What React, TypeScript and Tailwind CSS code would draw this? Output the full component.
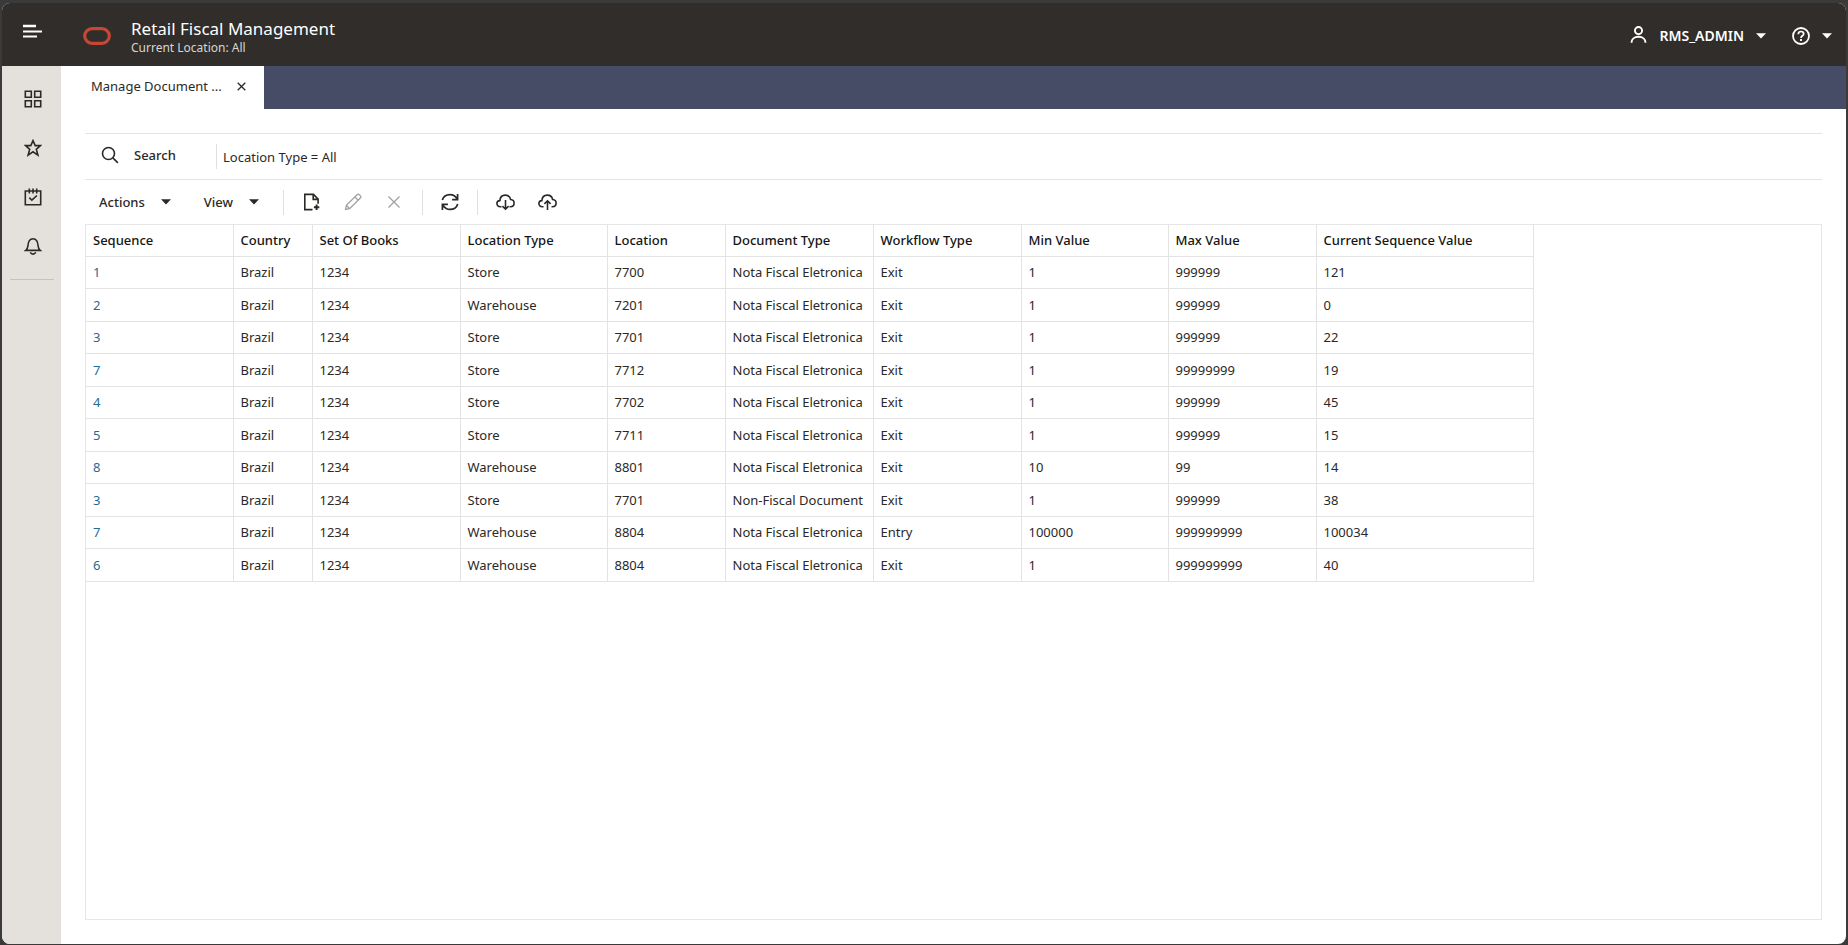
import type { ReactNode } from "react";

type IconProps = { children: ReactNode; className?: string; box?: string };

function Icon({ children, className = "size-[18px]", box = "0 0 18 18" }: IconProps) {
  return (
    <svg
      viewBox={box}
      className={`shrink-0 ${className}`}
      fill="none"
      stroke="currentColor"
      strokeWidth="1.600"
      aria-hidden="true"
    >
      {children}
    </svg>
  );
}

function Caret() {
  return (
    <svg viewBox="0 0 10 6" className="h-[6px] w-[10px] shrink-0" fill="currentColor" aria-hidden="true">
      <path d="M0 .3h10L5 5.6z" />
    </svg>
  );
}

const navItems: { label: string; icon: ReactNode }[] = [
  {
    label: "Dashboard",
    icon: (
      <Icon>
        <path d="M1.3 1.3h6v6h-6zM10.7 1.3h6v6h-6zM1.3 10.7h6v6h-6zM10.7 10.7h6v6h-6z" />
      </Icon>
    ),
  },
  {
    label: "Favorites",
    icon: (
      <Icon>
        <path d="M9 1.6l2.2 5h5.3l-4.2 3.7 1.6 5.8L9 12.8l-4.9 3.3 1.6-5.8L1.5 6.6h5.3z" />
      </Icon>
    ),
  },
  {
    label: "Tasks",
    icon: (
      <Icon>
        <path d="M1.3 3h15.4v13.7H1.3zM5.3.5v5M9 .5v5M12.7.5v5M5.3 9.6l2.6 2.6 5-4.7" />
      </Icon>
    ),
  },
  {
    label: "Notifications",
    icon: (
      <Icon>
        <path d="M1.8 13.4h14.4c-1.6-1.2-1.9-2.6-2.1-4.6C13.8 4.5 12.6 1.7 9 1.7S4.2 4.5 3.9 8.8c-.2 2-.5 3.4-2.1 4.6z" />
        <path d="M6.3 15.3c.5 1.200 1.400 1.800 2.700 1.800s2.200-.6 2.700-1.800" />
      </Icon>
    ),
  },
];

const columns = [
  { label: "Sequence", width: "w-[147px]" },
  { label: "Country", width: "w-[79px]" },
  { label: "Set Of Books", width: "w-[148px]" },
  { label: "Location Type", width: "w-[147px]" },
  { label: "Location", width: "w-[118px]" },
  { label: "Document Type", width: "w-[148px]" },
  { label: "Workflow Type", width: "w-[148px]" },
  { label: "Min Value", width: "w-[147px]" },
  { label: "Max Value", width: "w-[148px]" },
  { label: "Current Sequence Value", width: "w-[217px]" },
];

const NFE = "Nota Fiscal Eletronica";
const rows = [
  ["1", "Brazil", "1234", "Store", "7700", NFE, "Exit", "1", "999999", "121"],
  ["2", "Brazil", "1234", "Warehouse", "7201", NFE, "Exit", "1", "999999", "0"],
  ["3", "Brazil", "1234", "Store", "7701", NFE, "Exit", "1", "999999", "22"],
  ["7", "Brazil", "1234", "Store", "7712", NFE, "Exit", "1", "99999999", "19"],
  ["4", "Brazil", "1234", "Store", "7702", NFE, "Exit", "1", "999999", "45"],
  ["5", "Brazil", "1234", "Store", "7711", NFE, "Exit", "1", "999999", "15"],
  ["8", "Brazil", "1234", "Warehouse", "8801", NFE, "Exit", "10", "99", "14"],
  ["3", "Brazil", "1234", "Store", "7701", "Non-Fiscal Document", "Exit", "1", "999999", "38"],
  ["7", "Brazil", "1234", "Warehouse", "8804", NFE, "Entry", "100000", "999999999", "100034"],
  ["6", "Brazil", "1234", "Warehouse", "8804", NFE, "Exit", "1", "999999999", "40"],
];

function Header() {
  return (
    <header className="flex h-[63px] shrink-0 items-center bg-[#312d2a] pr-[14px] pl-[21px] text-white">
      <button aria-label="Toggle navigation" className="mb-2">
        <Icon className="h-[14px] w-[19px]" box="0 0 19 14">
          <path d="M0 2h13" strokeWidth="2.600" />
          <path d="M0 7.500h19M0 12.500h14" strokeWidth="1.800" />
        </Icon>
      </button>
      <svg viewBox="0 0 28 18" className="mt-[2px] ml-[41px] h-[18px] w-[28px] shrink-0" fill="none" aria-hidden="true">
        <rect x="1.700" y="1.700" width="24.600" height="14.600" rx="7.300" stroke="#c74634" strokeWidth="3.200" />
      </svg>
      <div className="ml-5 pt-1">
        <h1 className="text-[17px] leading-[22px]">Retail Fiscal Management</h1>
        <p className="text-[12px] leading-4 text-[#d8d5d2]">Current Location: All</p>
      </div>
      <div className="ml-auto flex items-center gap-[26px] pt-[2px]">
        <button className="flex items-center gap-3 text-[14px] leading-5 font-semibold">
          <Icon className="mb-[3px] size-[17px]" box="0 0 17 17">
            <g strokeWidth="1.900">
              <circle cx="8.500" cy="4.600" r="3.600" />
              <path d="M1.500 16.800c0-3.800 2.900-6 7-6s7 2.200 7 6" />
            </g>
          </Icon>
          RMS_ADMIN
          <Caret />
        </button>
        <button aria-label="Help" className="flex items-center gap-3">
          <Icon>
            <circle cx="9" cy="9" r="8" strokeWidth="1.800" />
            <path d="M6.300 7.200c0-1.700 1.100-2.700 2.700-2.700s2.700 1 2.700 2.400c0 1.900-2.700 1.900-2.700 4" strokeWidth="1.700" />
            <path d="M9 12v1.900" strokeWidth="1.900" />
          </Icon>
          <Caret />
        </button>
      </div>
    </header>
  );
}

function Sidebar() {
  return (
    <nav className="flex w-[59px] shrink-0 flex-col items-center bg-[#e4e1dd] pt-6 pl-[2px]">
      <ul className="flex flex-col gap-[31px]">
        {navItems.map((item) => (
          <li key={item.label}>
            <button aria-label={item.label} className="block">
              {item.icon}
            </button>
          </li>
        ))}
      </ul>
      <hr className="mt-6 mr-[2px] w-11 border-[#c6c3bf]" />
    </nav>
  );
}

function Divider() {
  return <span className="h-[25px] w-px shrink-0 bg-[#dfdfdf]" />;
}

function Toolbar() {
  return (
    <div className="flex h-11 items-center pl-[14px]" role="toolbar">
      <button className="flex items-center gap-4 font-medium">
        Actions
        <Caret />
      </button>
      <button className="ml-[33px] flex items-center gap-4 font-medium">
        View
        <Caret />
      </button>
      <div className="ml-6 flex items-center">
        <Divider />
        <div className="flex gap-[23px] px-[19px]">
          <button aria-label="Create">
            <Icon>
              <path d="M9.500 16.600H1.800V1.400h8.700l4.600 4.700v4.600" />
              <path d="M10.200 1.400v5h5" />
              <path d="M13.600 11.500v5.400M10.900 14.200h5.400" strokeWidth="1.900" />
            </Icon>
          </button>
          <button aria-label="Edit" disabled className="text-[#a3a19f]">
            <Icon>
              <path d="M1.500 16.500l.9-4.200L13 1.700c.8-.8 1.700-.7 2.400 0l.9.900c.7.7.8 1.600 0 2.400L5.700 15.600zM10.800 3.900l3.300 3.300M2.400 12.300l3.300 3.300" strokeWidth="1.300" />
            </Icon>
          </button>
          <button aria-label="Delete" disabled className="text-[#a3a19f]">
            <Icon>
              <path d="M3.500 3.500l11 11M14.500 3.500l-11 11" strokeWidth="1.300" />
            </Icon>
          </button>
        </div>
        <Divider />
        <div className="px-[18px]">
          <button aria-label="Refresh" className="block">
            <Icon>
              <path d="M1.300 7.100C2.300 3.600 5.300 1.600 9 1.600c3.200 0 5.700 1.700 7.200 4.600M16.600 1v5.700h-5.500M16.700 10.900c-1 3.500-4 5.500-7.700 5.500-3.200 0-5.700-1.700-7.200-4.600M1.400 17v-5.700h5.500" strokeWidth="1.700" />
            </Icon>
          </button>
        </div>
        <Divider />
        <div className="flex gap-[23px] pl-[18px]">
          <button aria-label="Download">
            <Icon className="h-[18px] w-[19px]" box="0 0 19 18">
              <path d="M5.500 13.700H4.400C2.300 13.700.9 12.500.9 10.600c0-1.800 1.200-2.900 3-3C4.100 4.100 6.200 2.100 9.300 2.100c2.800 0 4.800 1.700 5.300 4.400 2.200.2 3.500 1.600 3.500 3.500 0 2.200-1.500 3.700-3.700 3.700h-.9" />
              <path d="M9.500 7v9M6.400 13.100l3.100 3.100 3.100-3.100" />
            </Icon>
          </button>
          <button aria-label="Upload">
            <Icon className="h-[18px] w-[19px]" box="0 0 19 18">
              <path d="M5.500 13.700H4.400C2.300 13.700.9 12.500.9 10.600c0-1.800 1.200-2.900 3-3C4.100 4.100 6.200 2.100 9.300 2.100c2.800 0 4.800 1.700 5.300 4.400 2.200.2 3.500 1.600 3.500 3.500 0 2.200-1.500 3.700-3.700 3.700h-.9" />
              <path d="M9.500 17V8M6.400 10.900l3.100-3.100 3.100 3.100" />
            </Icon>
          </button>
        </div>
      </div>
    </div>
  );
}

function SequenceTable() {
  return (
    <table className="table-fixed border-collapse text-left">
      <thead>
        <tr className="h-[31px]">
          {columns.map((c) => (
            <th
              key={c.label}
              scope="col"
              className={`${c.width} border-r border-b border-[#e3e3e3] px-[7px] font-medium text-[#161513]`}
            >
              {c.label}
            </th>
          ))}
        </tr>
      </thead>
      <tbody>
        {rows.map((row, r) => (
          <tr key={r} className="odd:h-8 even:h-[33px]">
            {row.map((cell, i) => (
              <td key={i} className="border-r border-b border-[#e3e3e3] pl-[7px] whitespace-nowrap">
                {i === 0 ? (
                  <a href="#" className="text-[#1f6b94]">
                    {cell}
                  </a>
                ) : (
                  cell
                )}
              </td>
            ))}
          </tr>
        ))}
      </tbody>
    </table>
  );
}

export default function App() {
  return (
    <div className="h-screen bg-[#3a3a3b] px-[2px] pt-[3px] pb-px font-['Noto_Sans',sans-serif] text-[13px] leading-5 text-[#2b2927]">
      <div className="flex h-full flex-col overflow-hidden rounded-lg bg-white">
        <Header />
        <div className="flex min-h-0 flex-1">
          <Sidebar />
          <div className="flex min-w-0 flex-1 flex-col">
            <div className="flex h-[43px] shrink-0 bg-[#464b66]">
              <div className="flex items-center bg-white pr-[18px] pb-[3px] pl-[30px]">
                <span className="w-[136px] whitespace-nowrap">Manage Document ...</span>
                <button aria-label="Close tab" className="ml-[10px]">
                  <Icon className="size-[9px]" box="0 0 9 9">
                    <path d="M.7.700l7.600 7.600M8.300.700L.7 8.300" strokeWidth="1.300" />
                  </Icon>
                </button>
              </div>
            </div>
            <main className="flex min-h-0 flex-1 flex-col p-6">
              <div className="flex h-[47px] shrink-0 items-center border-y border-[#e3e3e3] pl-4">
                <button className="flex w-[115px] items-center gap-[15px] pb-1 font-medium">
                  <Icon>
                    <circle cx="7.500" cy="7.500" r="6" />
                    <path d="M11.900 11.900l5 5" />
                  </Icon>
                  Search
                </button>
                <Divider />
                <span className="pl-[6px]">Location Type = All</span>
              </div>
              <Toolbar />
              <section className="min-h-0 flex-1 overflow-auto border border-[#e6e6e6]">
                <SequenceTable />
              </section>
            </main>
          </div>
        </div>
      </div>
    </div>
  );
}
